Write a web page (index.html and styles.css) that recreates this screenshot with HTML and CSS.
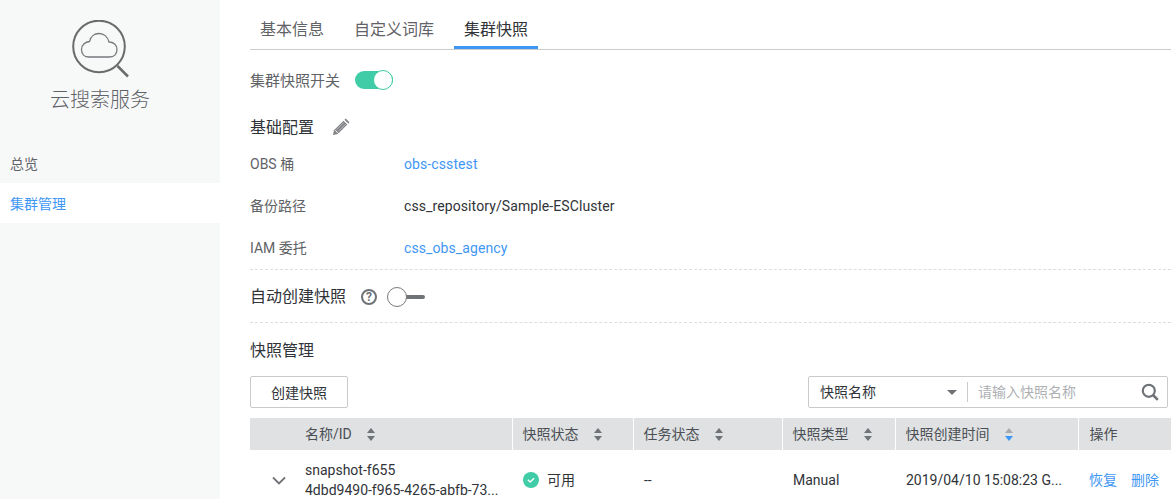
FILE: index.html
```html
<!DOCTYPE html>
<html lang="zh-CN">
<head>
    <meta charset="UTF-8">
    <title>云搜索服务</title>
    <link rel="stylesheet" href="styles.css">
</head>
<body>
    <div class="sidebar">
        <div class="logo">
            <svg class="logo-icon" width="60" height="60" viewBox="0 0 60 60" fill="none">
                <circle cx="27" cy="26.500" r="25.800" stroke="#6b6b6b" stroke-width="2"/>
                <path d="M45.500 46l10.500 10.500" stroke="#6b6b6b" stroke-width="2.500"/>
                <path d="M17 37.500h20c5 0 8-3 8-7.500 0-4.500-3.500-7.500-8-7.500-1-5-5-8.500-10-8.500-4.800 0-8.500 3.200-9.500 8-4.500 .3-8 3.500-8 8 0 4.500 3 7.500 7.500 7.500z" transform="translate(0 -.5)" stroke="#77797c" stroke-width="1.300"/>
            </svg>
            <div class="logo-title">云搜索服务</div>
        </div>
        <div class="menu-item">总览</div>
        <div class="menu-item active">集群管理</div>
    </div>

    <div class="main">
        <div class="tabs">
            <div class="tab">基本信息</div>
            <div class="tab">自定义词库</div>
            <div class="tab current">集群快照</div>
        </div>

        <div class="switch-row">
            <span class="switch-label">集群快照开关</span>
            <span class="switch on"><i></i></span>
        </div>

        <div class="section-title edit-title">
            <span>基础配置</span>
            <svg width="18" height="18" viewBox="0 0 18 18">
                <path d="M1 17l1-4.800L11.500 2.700l3.800 3.800L5.800 16z" fill="#808285"/>
                <path d="M12.500 1.700l1.200-1.100 3.700 3.700-1.100 1.200z" fill="#808285"/>
                <path d="M4.500 11.800l7.500-7.500M6.200 13.500l7.500-7.500" stroke="#c9cbcd" stroke-width=".8"/>
                <path d="M3.200 12.300l3.500 3.500" stroke="#fff" stroke-width="1"/>
            </svg>
        </div>

        <div class="info-list">
            <div class="info-row"><span class="info-key">OBS 桶</span><a class="link">obs-csstest</a></div>
            <div class="info-row"><span class="info-key">备份路径</span><span>css_repository/Sample-ESCluster</span></div>
            <div class="info-row"><span class="info-key">IAM 委托</span><a class="link">css_obs_agency</a></div>
        </div>

        <div class="auto-row">
            <span class="auto-title">自动创建快照</span>
            <span class="help">?</span>
            <span class="switch off"><i></i></span>
        </div>

        <div class="section-title manage-title">快照管理</div>

        <div class="toolbar">
            <button class="btn">创建快照</button>
            <div class="search">
                <div class="search-select">快照名称<span class="caret"></span></div>
                <div class="search-input">请输入快照名称</div>
                <svg width="18" height="18" viewBox="0 0 18 18" fill="none">
                    <circle cx="7.800" cy="7.800" r="6" stroke="#6f7276" stroke-width="2.200"/>
                    <path d="M12 12l4.800 4.800" stroke="#6f7276" stroke-width="2.600"/>
                </svg>
            </div>
        </div>

        <table class="snap-table">
            <colgroup>
                <col class="c-arrow"><col class="c-name"><col class="c-state"><col class="c-task"><col class="c-type"><col class="c-time"><col class="c-op">
            </colgroup>
            <thead>
                <tr>
                    <th></th>
                    <th class="name-th">名称/ID<span class="sort"></span></th>
                    <th>快照状态<span class="sort"></span></th>
                    <th>任务状态<span class="sort"></span></th>
                    <th>快照类型<span class="sort"></span></th>
                    <th>快照创建时间<span class="sort desc"></span></th>
                    <th class="op-th">操作</th>
                </tr>
            </thead>
            <tbody>
                <tr>
                    <td class="arrow-td">
                        <svg width="14" height="9" viewBox="0 0 14 9" fill="none"><path d="M1 1.500l6 6 6-6" stroke="#6f7276" stroke-width="1.800"/></svg>
                    </td>
                    <td class="name-td">snapshot-f655<br>4dbd9490-f965-4265-abfb-73...</td>
                    <td>
                        <span class="state">
                            <svg width="16" height="16" viewBox="0 0 16 16"><circle cx="8" cy="8" r="8" fill="#3fcca6"/><path d="M4.800 7.800l2.300 2.200 4-3.800" fill="none" stroke="#fff" stroke-width="1.400"/></svg>
                            可用
                        </span>
                    </td>
                    <td>--</td>
                    <td>Manual</td>
                    <td>2019/04/10 15:08:23 G...</td>
                    <td class="ops"><a class="link">恢复</a><a class="link">删除</a></td>
                </tr>
            </tbody>
        </table>
    </div>
</body>
</html>
```

FILE: styles.css
```css
* {
    box-sizing: border-box;
}
html, body {
    height: 499px;
    overflow: hidden;
}
body {
    margin: 0;
    display: flex;
    background-color: #fff;
    color: #303338;
    font-family: Roboto, "Noto Sans CJK SC", sans-serif;
    font-size: 14px;
    line-height: 20px;
}
.link {
    color: #3f97f5;
}

/* 左侧菜单 */
.sidebar {
    width: 220px;
    flex: none;
    background-color: #f7f9f9;
}
.logo {
    height: 143px;
    width: 200px;
    padding-top: 20px;
    text-align: center;
}
.logo-icon {
    display: block;
    margin-left: 72px;
}
.logo-title {
    margin-top: 6px;
    font-size: 20px;
    font-weight: 300;
    line-height: 28px;
    color: #5f6266;
}
.menu-item {
    height: 40px;
    padding-left: 10px;
    line-height: 42px;
    color: #5f6266;
}
.menu-item.active {
    background-color: #fff;
    color: #3f97f5;
}

/* 右侧内容 */
.main {
    flex: 1;
    min-width: 0;
    padding: 10px 0 0 30px;
}
.tabs {
    display: flex;
    height: 40px;
    border-bottom: 1px solid #ccc;
}
.tab {
    padding: 10px 10px 0;
    margin-right: 10px;
    font-size: 16px;
    color: #5f6266;
}
.tab.current {
    margin-right: 0;
    height: 39px;
    border-bottom: 3px solid #3f97f5;
    color: #303338;
}

.switch-row {
    display: flex;
    align-items: center;
    height: 20px;
    margin-top: 20px;
}
.switch-label {
    margin-right: 15px;
    padding-top: 1px;
    font-size: 15px;
    color: #5f6266;
}
.switch {
    position: relative;
    display: block;
    width: 38px;
}
.switch.on {
    height: 18px;
    border-radius: 9px;
    background-color: #3fcca6;
}
.switch.on i {
    position: absolute;
    right: 0;
    top: -1px;
    width: 20px;
    height: 20px;
    border: 1px solid #3fcca6;
    border-radius: 50%;
    background-color: #fff;
}
.switch.off {
    height: 20px;
}
.switch.off::before {
    content: "";
    position: absolute;
    left: 14px;
    right: 0;
    top: 8px;
    height: 4px;
    border-radius: 2px;
    background-color: #6f7276;
}
.switch.off i {
    position: absolute;
    left: 0;
    top: 0;
    width: 20px;
    height: 20px;
    border: 1px solid #77797c;
    border-radius: 50%;
    background-color: #fff;
}

.section-title {
    font-size: 16px;
    color: #303338;
}
.edit-title {
    display: flex;
    align-items: center;
    gap: 18px;
    margin-top: 27px;
    height: 20px;
}
.edit-title span {
    padding-top: 2px;
}
.info-list {
    margin-top: 6px;
}
.info-row {
    display: flex;
    height: 42px;
    align-items: center;
    letter-spacing: .1px;
}
.info-key {
    width: 154px;
    letter-spacing: 0;
    color: #5f6266;
}

.auto-row {
    display: flex;
    align-items: center;
    height: 54px;
    padding-top: 2px;
    border-top: 1px dashed #ddd;
    border-bottom: 1px dashed #ddd;
}
.auto-title {
    font-size: 16px;
    margin-right: 15px;
}
.help {
    width: 16px;
    height: 16px;
    margin-right: 10px;
    border: 2px solid #6f7276;
    border-radius: 50%;
    font-size: 12px;
    font-weight: 700;
    line-height: 12px;
    text-align: center;
    color: #6f7276;
}
.manage-title {
    margin-top: 18px;
}

.toolbar {
    display: flex;
    justify-content: space-between;
    margin-top: 15px;
    padding-right: 3px;
}
.btn {
    width: 98px;
    height: 32px;
    padding: 0;
    border: 1px solid #c8cacc;
    border-radius: 2px;
    background-color: #fff;
    color: #303338;
    font-family: inherit;
    font-size: 14px;
}
.search {
    display: flex;
    align-items: center;
    width: 360px;
    height: 32px;
    border: 1px solid #c8cacc;
    border-radius: 2px;
    padding-right: 8px;
}
.search-select {
    position: relative;
    width: 159px;
    height: 20px;
    padding-left: 11px;
    border-right: 1px solid #ccc;
}
.caret {
    position: absolute;
    right: 10px;
    top: 8px;
    border-left: 5px solid transparent;
    border-right: 5px solid transparent;
    border-top: 5px solid #6f7276;
}
.search-input {
    flex: 1;
    padding-left: 10px;
    color: #aeb0b3;
}

/* 表格 */
.snap-table {
    width: 921px;
    margin-top: 10px;
    border-collapse: collapse;
    table-layout: fixed;
}
.c-arrow { width: 55px; }
.c-name { width: 207px; }
.c-state { width: 121px; }
.c-task { width: 149px; }
.c-type { width: 113px; }
.c-time { width: 183px; }
.c-op { width: 93px; }
.snap-table th {
    height: 32px;
    padding: 0 10px;
    background-color: #dfe1e2;
    border-left: 1px solid #fff;
    font-weight: 400;
    text-align: left;
    white-space: nowrap;
    color: #4b4f55;
}
.snap-table th:first-child,
.snap-table th.name-th {
    border-left: none;
}
.snap-table th.name-th {
    padding-left: 0;
}
.snap-table th.op-th {
    padding-left: 11px;
}
.snap-table td {
    height: 60px;
    padding: 0 10px 0 11px;
    white-space: nowrap;
}
.snap-table td.name-td {
    padding: 0;
}
.snap-table td.arrow-td {
    padding: 0 0 0 22px;
}
.sort {
    display: inline-block;
    position: relative;
    width: 8px;
    height: 13px;
    margin-left: 15px;
    vertical-align: -2px;
}
.sort::before,
.sort::after {
    content: "";
    position: absolute;
    left: 0;
    border-left: 4px solid transparent;
    border-right: 4px solid transparent;
}
.sort::before {
    top: 0;
    border-bottom: 5px solid #6f7276;
}
.sort::after {
    bottom: 0;
    border-top: 5px solid #6f7276;
}
.sort.desc::before {
    border-bottom-color: #a8abad;
}
.sort.desc::after {
    border-top-color: #3f97f5;
}
.state {
    display: flex;
    align-items: center;
    gap: 8px;
}
.ops a {
    margin-right: 14px;
}
```
